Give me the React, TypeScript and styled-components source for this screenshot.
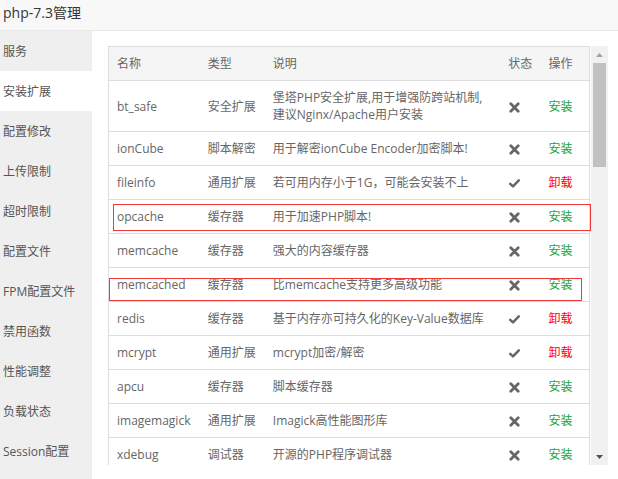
import React from "react";
import styled, { createGlobalStyle } from "styled-components";

const Global = createGlobalStyle`
  html, body { margin: 0; padding: 0; background: #fff; }
  body { font-family: "Open Sans", "Noto Sans CJK SC", sans-serif; }
  * { box-sizing: border-box; }
`;

const Page = styled.div`
  width: 618px;
  height: 479px;
  display: flex;
  flex-direction: column;
  overflow: hidden;
  background: #fff;
`;

const TitleBar = styled.div`
  height: 31px;
  flex: none;
  padding: 0 3px 7px;
  display: flex;
  align-items: center;
  font-size: 14px;
  color: #333;
  background: #f8f8f8;
  border-bottom: 1px solid #e8e8e8;
`;

const Body = styled.div`
  flex: 1;
  display: flex;
  min-height: 0;
`;

const Sidebar = styled.div`
  width: 92px;
  flex: none;
  background: #efefef;
  display: flex;
  flex-direction: column;
`;

const NavItem = styled.div<{ $active?: boolean }>`
  height: 40px;
  display: flex;
  align-items: center;
  padding-left: 3px;
  font-size: 12px;
  color: #555;
  background: ${(p) => (p.$active ? "#fff" : "transparent")};
  white-space: nowrap;
`;

const Content = styled.div`
  flex: 1;
  padding: 15px 10px 0 16px;
`;

const ScrollBox = styled.div`
  position: relative;
  height: 419px;
  width: 500px;
  display: flex;
`;

const Viewport = styled.div`
  flex: 1;
  overflow: hidden;
`;

const Table = styled.table`
  width: 482px;
  table-layout: fixed;
  border-collapse: collapse;
  border: 1px solid #ddd;
  font-size: 12px;
  color: #666;
`;

const Th = styled.th`
  text-align: left;
  font-weight: normal;
  background: #f5f5f5;
  padding: 8px 0 8px 8px;
  line-height: 17px;
  border-bottom: 1px solid #ddd;
  white-space: nowrap;
`;

const Td = styled.td`
  padding: 8px 0 8px 8px;
  line-height: 17px;
  border-bottom: 1px solid #ddd;
  vertical-align: middle;
  white-space: nowrap;
`;

const DescTd = styled(Td)`
  white-space: normal;
  padding-right: 4px;
`;

const Action = styled.span<{ $uninstall?: boolean }>`
  color: ${(p) => (p.$uninstall ? "#ff0000" : "#20a53a")};
  cursor: pointer;
`;

const ScrollTrack = styled.div`
  width: 17px;
  flex: none;
  background: #f1f1f1;
  display: flex;
  flex-direction: column;
  align-items: center;
`;

const ArrowBtn = styled.div`
  height: 17px;
  width: 17px;
  display: flex;
  align-items: center;
  justify-content: center;
  flex: none;
`;

const Thumb = styled.div`
  width: 13px;
  height: 104px;
  background: #c1c1c1;
  flex: none;
`;

const Spacer = styled.div`
  flex: 1;
`;

const Mark = styled.div<{ $left: number; $top: number; $w: number; $h: number }>`
  position: absolute;
  left: ${(p) => p.$left}px;
  top: ${(p) => p.$top}px;
  width: ${(p) => p.$w}px;
  height: ${(p) => p.$h}px;
  border: 1px solid #f03a3a;
  pointer-events: none;
`;

const IconWrap = styled.span`
  display: inline-flex;
  align-items: center;
  padding-left: 1px;
  vertical-align: middle;
`;

const Cross = () => (
  <IconWrap>
    <svg width="11" height="11" viewBox="0 0 11 11">
      <path d="M1.8 1.8 L9.2 9.2 M9.2 1.8 L1.8 9.2" stroke="#666" strokeWidth="2.8" strokeLinecap="round" />
    </svg>
  </IconWrap>
);

const Check = () => (
  <IconWrap>
    <svg width="11" height="9" viewBox="0 0 11 9">
      <path d="M1.2 4.8 L4 7.4 L9.8 1.4" stroke="#666" strokeWidth="2.5" fill="none" strokeLinecap="round" strokeLinejoin="round" />
    </svg>
  </IconWrap>
);

const navs = [
  "服务",
  "安装扩展",
  "配置修改",
  "上传限制",
  "超时限制",
  "配置文件",
  "FPM配置文件",
  "禁用函数",
  "性能调整",
  "负载状态",
  "Session配置",
];

type Row = { name: string; type: string; desc: React.ReactNode; installed: boolean };

const rows: Row[] = [
  {
    name: "bt_safe",
    type: "安全扩展",
    desc: (
      <>
        堡塔PHP安全扩展,用于增强防跨站机制,
        <br />
        建议Nginx/Apache用户安装
      </>
    ),
    installed: false,
  },
  { name: "ionCube", type: "脚本解密", desc: "用于解密ionCube Encoder加密脚本!", installed: false },
  { name: "fileinfo", type: "通用扩展", desc: "若可用内存小于1G，可能会安装不上", installed: true },
  { name: "opcache", type: "缓存器", desc: "用于加速PHP脚本!", installed: false },
  { name: "memcache", type: "缓存器", desc: "强大的内容缓存器", installed: false },
  { name: "memcached", type: "缓存器", desc: "比memcache支持更多高级功能", installed: false },
  { name: "redis", type: "缓存器", desc: "基于内存亦可持久化的Key-Value数据库", installed: true },
  { name: "mcrypt", type: "通用扩展", desc: "mcrypt加密/解密", installed: true },
  { name: "apcu", type: "缓存器", desc: "脚本缓存器", installed: false },
  { name: "imagemagick", type: "通用扩展", desc: "Imagick高性能图形库", installed: false },
  { name: "xdebug", type: "调试器", desc: "开源的PHP程序调试器", installed: false },
];

export default function App() {
  return (
    <Page>
      <Global />
      <TitleBar>php-7.3管理</TitleBar>
      <Body>
        <Sidebar>
          {navs.map((n) => (
            <NavItem key={n} $active={n === "安装扩展"}>
              {n}
            </NavItem>
          ))}
        </Sidebar>
        <Content>
          <ScrollBox>
            <Viewport>
              <Table>
                <colgroup>
                  <col style={{ width: 91 }} />
                  <col style={{ width: 65 }} />
                  <col style={{ width: 235 }} />
                  <col style={{ width: 40 }} />
                  <col style={{ width: 49 }} />
                </colgroup>
                <thead>
                  <tr>
                    <Th>名称</Th>
                    <Th>类型</Th>
                    <Th>说明</Th>
                    <Th>状态</Th>
                    <Th>操作</Th>
                  </tr>
                </thead>
                <tbody>
                  {rows.map((r) => (
                    <tr key={r.name}>
                      <Td>{r.name}</Td>
                      <Td>{r.type}</Td>
                      <DescTd>{r.desc}</DescTd>
                      <Td>{r.installed ? <Check /> : <Cross />}</Td>
                      <Td>
                        <Action $uninstall={r.installed}>{r.installed ? "卸载" : "安装"}</Action>
                      </Td>
                    </tr>
                  ))}
                </tbody>
              </Table>
            </Viewport>
            <ScrollTrack>
              <ArrowBtn>
                <svg width="7" height="4" viewBox="0 0 7 4">
                  <path d="M0 4 L3.5 0 L7 4 Z" fill="#a3a3a3" />
                </svg>
              </ArrowBtn>
              <Thumb />
              <Spacer />
              <ArrowBtn>
                <svg width="7" height="4" viewBox="0 0 7 4">
                  <path d="M0 0 L7 0 L3.5 4 Z" fill="#505050" />
                </svg>
              </ArrowBtn>
            </ScrollTrack>
            <Mark $left={5} $top={158} $w={478} $h={27} />
            <Mark $left={1} $top={232} $w={473} $h={23} />
          </ScrollBox>
        </Content>
      </Body>
    </Page>
  );
}
